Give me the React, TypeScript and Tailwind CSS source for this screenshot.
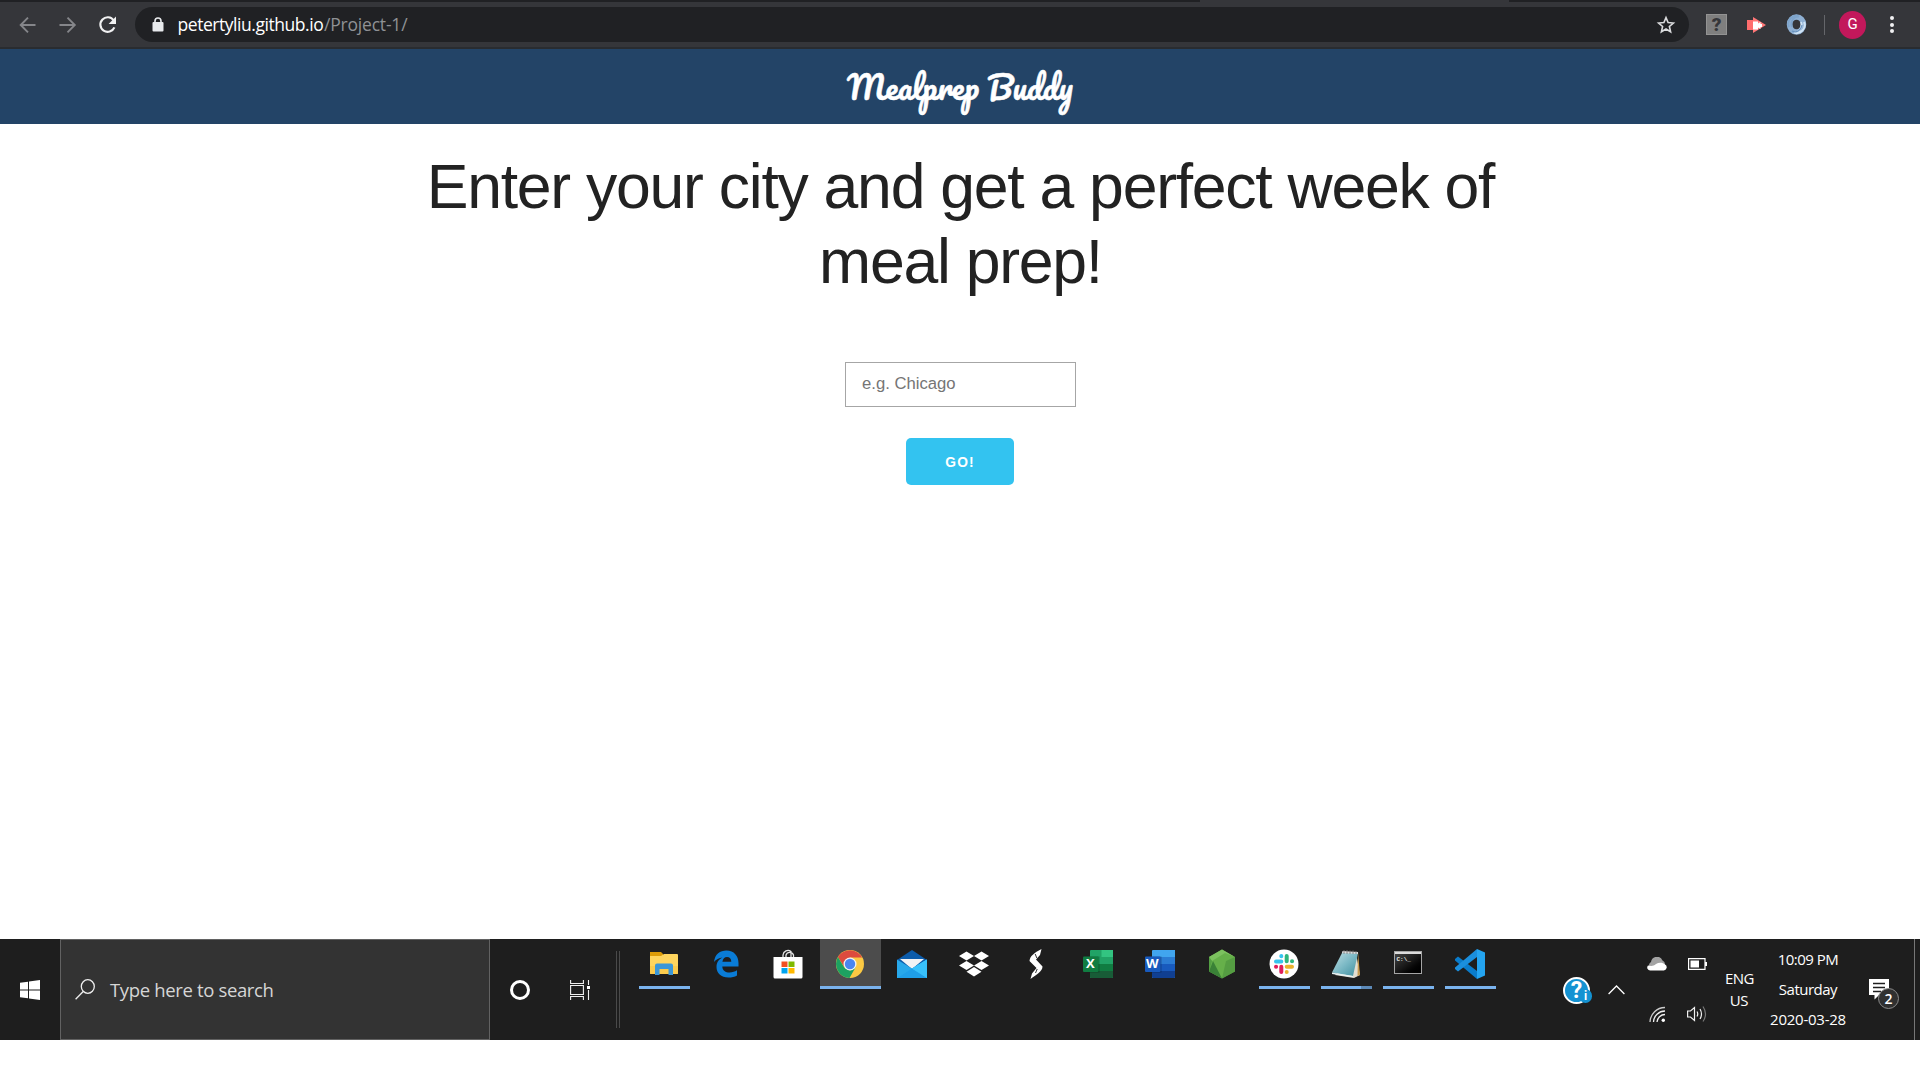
import React from "react";

const SEGOE = "font-['Segoe_UI','Open_Sans','Noto_Sans',sans-serif]";

function BrowserBar() {
  return (
    <div className={`flex h-[49px] w-full flex-col bg-[#35363a] ${SEGOE}`}>
      <div className="flex h-[2px] bg-[#202124]">
        <div className="ml-[1200px] w-[309px] bg-[#35363a]" />
      </div>
      <div className="flex h-[45px] items-center">
        <svg className="ml-[18px]" width="20" height="20" viewBox="0 0 20 20" fill="none" stroke="#85868a" strokeWidth="1.9">
          <path d="M17.5 10H3M10 2.7L2.7 10L10 17.3" />
        </svg>
        <svg className="ml-5" width="20" height="20" viewBox="0 0 20 20" fill="none" stroke="#85868a" strokeWidth="1.9">
          <path d="M1.500 10H16.500M9.500 2.7L16.800 10L9.500 17.3" />
        </svg>
        <svg className="ml-5" width="20" height="20" viewBox="0 0 20 20" fill="none">
          <path d="M15.700 5.4A7.3 7.3 0 1 0 16.400 12.4" stroke="#f1f1f2" strokeWidth="2.2" />
          <path d="M18 1.6V9H10.600Z" fill="#f1f1f2" />
        </svg>
        <div className="ml-[17px] flex h-[35px] w-[1554px] items-center rounded-full bg-[#202124]">
          <svg className="ml-[16.5px]" width="12" height="15" viewBox="0 0 12 15">
            <path d="M3 6V4a3 3 0 0 1 6 0V6" fill="none" stroke="#e8eaed" strokeWidth="1.6" />
            <rect x="0.5" y="5" width="11" height="9.5" rx="1" fill="#e8eaed" />
          </svg>
          <div className="ml-[14px] flex text-[17.5px] leading-none">
            <span className="w-[146.5px] whitespace-nowrap tracking-[-0.45px] text-white">petertyliu.github.io</span>
            <span className="whitespace-nowrap tracking-[-0.2px] text-[#8f9195]">/Project-1/</span>
          </div>
          <svg className="ml-auto mr-[13px]" width="20" height="20" viewBox="0 0 20 20" fill="none" stroke="#dadbdd" strokeWidth="1.6">
            <path d="M10 2.6L12.1 7.5L17.4 8L13.4 11.5L14.6 16.8L10 14L5.4 16.8L6.6 11.5L2.6 8L7.9 7.5Z" />
          </svg>
        </div>
        <div className="ml-[17px] flex h-[21px] w-[21px] items-center justify-center border border-[#939393] bg-[#7f7f7f] font-['Roboto'] text-[19px] font-black leading-none text-[#35363a]">?</div>
        <svg className="ml-[19px]" width="21" height="18" viewBox="0 0 21 18">
          <path d="M1 4h6V1l13 8L7 17v-3H1Z" fill="#ff7777" />
          <path d="M1 4h6v10H1Z" fill="#ff6d6d" />
          <path d="M7 5.500h5v2l2.500-1.500v2h1.500v3h-1.500v2l-2.500-1.500v2H7Z" fill="#fff" />
        </svg>
        <svg className="ml-[19px]" width="21" height="21" viewBox="0 0 21 21" fill="none">
          <ellipse cx="10.5" cy="10.5" rx="7" ry="7.500" stroke="#8fb0d3" strokeWidth="5.5" />
          <path d="M3 13C0 6 7 0 13 2.5C8 2 4 7 6 13" stroke="#7ea4cb" strokeWidth="2" />
          <path d="M18 8C21 14 14 21 8 18.5C13 19 17 13 15 8" stroke="#cfe3f5" strokeWidth="2" />
          <path d="M6 17C10 19 15 17 16 11" stroke="#6a93c0" strokeWidth="1.2" />
        </svg>
        <div className="ml-[17px] h-5 w-px bg-[#65666a]" />
        <div className="ml-[14px] flex h-7 w-[27px] items-center justify-center rounded-full bg-[#c2185b] font-['Roboto'] text-[15px] text-white">G</div>
        <div className="ml-[24px] flex flex-col gap-[2.5px]">
          <i className="size-1 rounded-full bg-[#f1f1f2]" />
          <i className="size-1 rounded-full bg-[#f1f1f2]" />
          <i className="size-1 rounded-full bg-[#f1f1f2]" />
        </div>
      </div>
      <div className="h-[2px] bg-[#292c30]" />
    </div>
  );
}

const Explorer = () => (
  <svg width="30" height="30" viewBox="0 0 30 30">
    <path d="M1 3h11l2 2v4H1Z" fill="#dd9c08" />
    <path d="M1 7h11l3-2h13a1 1 0 0 1 1 1v18a1 1 0 0 1-1 1H2a1 1 0 0 1-1-1Z" fill="#ffd55e" />
    <path d="M1 17h28v7a1 1 0 0 1-1 1H2a1 1 0 0 1-1-1Z" fill="#fbcb4d" />
    <path d="M6 26V16.500a2 2 0 0 1 2-2h14a2 2 0 0 1 2 2V26h-4.500v-6h-9v6Z" fill="#3b97d8" />
  </svg>
);
const Edge = () => (
  <svg width="28" height="30" viewBox="0 0 28 30">
    <path d="M2 13C3 5 8 1.500 14.500 1.500C22 1.500 26.500 7 26.500 14V17.500H10.300C10.500 21.500 13.500 23.500 17.500 23.500C20.500 23.500 22.800 22.600 25 21.300V26.500C22.500 27.900 19.800 28.500 16.500 28.500C9 28.500 4.500 24 4.500 18C4.500 13.500 7 10.200 10.500 8.600C7 9 4 10.500 2 13ZM10.400 12.800H19.300C19.300 9.700 17.700 8 15 8C12.500 8 10.900 10 10.400 12.800Z" fill="#0a7cd6" />
  </svg>
);
const Store = () => (
  <svg width="30" height="30" viewBox="0 0 30 30">
    <path d="M10 9V6a5 5 0 0 1 8-3.500V9M13 9V6a4 4 0 0 1 7.500 0V9" fill="none" stroke="#e5e5e5" strokeWidth="1.300" />
    <path d="M.5 8h29v20a1.500 1.500 0 0 1-1.500 1.500H2A1.500 1.500 0 0 1 .5 28Z" fill="#fff" />
    <path d="M8.500 12.500h6v5.500h-6Z" fill="#f25022" />
    <path d="M15.500 12.500h6v5.500h-6Z" fill="#7fba00" />
    <path d="M8.500 19h6v5.500h-6Z" fill="#00a4ef" />
    <path d="M15.500 19h6v5.500h-6Z" fill="#ffb900" />
  </svg>
);
const Chrome = () => (
  <svg width="28" height="28" viewBox="0 0 28 28">
    <circle cx="14" cy="14" r="14" fill="#fbc943" />
    <path d="M1.900 7A14 14 0 0 1 26.100 7.500H14L8.300 17Z" fill="#dd4b3e" />
    <path d="M1.900 7L8.300 17.500L14 20.500L19.500 17.500L13.500 28A14 14 0 0 1 1.900 7Z" fill="#1da261" />
    <circle cx="14" cy="14" r="6.500" fill="#f4f4f4" />
    <circle cx="14" cy="14" r="5.200" fill="#4a86f0" />
  </svg>
);
const Mail = () => (
  <svg width="30" height="30" viewBox="0 0 30 30">
    <path d="M0 11L15 1L30 11L15 20Z" fill="#0c5cab" />
    <path d="M3 10H27L15 20Z" fill="#f3f3f5" />
    <path d="M0 10.500L15 19.500L30 10.500V29H0Z" fill="#28a8ea" />
    <path d="M0 29L30 10.500V29Z" fill="#32b8f5" />
    <path d="M15 19.500L30 29H0Z" fill="#1f9fe8" />
    <path d="M15 19.500L30 10.500V29Z" fill="#38c1fb" />
  </svg>
);
const Dropbox = () => (
  <svg width="30" height="28" viewBox="0 0 30 28" fill="#fff">
    <path d="M7.500 1.500L15 6L7.500 10.500L0 6ZM22.500 1.500L30 6L22.500 10.500L15 6ZM7.500 11L15 15.500L7.500 20L0 15.500ZM22.500 11L30 15.500L22.500 20L15 15.500ZM15 17L22.500 21.800L15 26.500L7.500 21.800Z" />
  </svg>
);
const Swirl = () => (
  <svg width="16" height="32" viewBox="0 0 16 32" fill="#fff">
    <path d="M13.500 1C6 5 2 8 1.500 13L8.500 20L4 25.500L2.500 31C9 26 14.500 23.500 14.500 18.500L8 11.500L12 7Z" />
    <path d="M7.200 6L8.800 10M7.500 25L9.200 21" stroke="#1e1e1e" strokeWidth=".9" />
  </svg>
);
function Office({ letter, colors }: { letter: string; colors: string[] }) {
  return (
    <div className="relative">
      <svg width="30" height="28" viewBox="0 0 30 28">
        <path d="M7 1a1 1 0 0 1 1-1h21a1 1 0 0 1 1 1v26a1 1 0 0 1-1 1H8a1 1 0 0 1-1-1Z" fill={colors[0]} />
        <path d="M18.500 0H30v7H18.500Z" fill={colors[1]} />
        <path d="M7 7h23v7H7Z" fill={colors[2]} />
        <path d="M7 14h23v7H7Z" fill={colors[3]} />
        <path d="M7 21h23v6a1 1 0 0 1-1 1H8a1 1 0 0 1-1-1Z" fill={colors[4]} />
        <path d="M7 6.500h9.500v16H7Z" fill="#000" opacity=".25" />
        <rect x="0" y="6.500" width="15.500" height="15.500" rx="1" fill={colors[5]} />
      </svg>
      <span className="absolute left-0 top-[6.5px] flex h-[15.5px] w-[15.5px] items-center justify-center font-['Open_Sans'] text-[13px] font-bold leading-none text-white">{letter}</span>
    </div>
  );
}
const NodeHex = () => (
  <svg width="26" height="30" viewBox="0 0 26 30">
    <path d="M13 .5L26 8V22.500L13 29.500L0 22.500V8Z" fill="#66b04a" />
    <path d="M13 .5L26 8L16 4L3 12L0 8Z" fill="#7cc15f" />
    <path d="M3 12L0 22.500V8Z" fill="#539e43" />
    <path d="M4 12L13 29.500L0 22.500Z" fill="#3a8137" />
    <path d="M17 12L26 8V22.500L13 29.500Z" fill="#4f963f" opacity=".7" />
  </svg>
);
const Slack = () => (
  <svg width="30" height="30" viewBox="0 0 30 30" fill="none" strokeLinecap="round" strokeWidth="4">
    <circle cx="15" cy="15" r="14.500" fill="#fff" />
    <path d="M7 12.500H12.300M12.300 7V7.200" stroke="#36c5f0" />
    <path d="M17.700 7V12.300M23 12.300H23.100" stroke="#2eb67d" />
    <path d="M17.700 17.700H23M17.700 23V23.100" stroke="#ecb22e" />
    <path d="M12.300 17.800V23M7 17.700H7.100" stroke="#e01e5a" />
  </svg>
);
const Notepad = () => (
  <svg width="28" height="30" viewBox="0 0 28 30">
    <defs>
      <linearGradient id="pad" x1="0" y1="0" x2="1" y2="1">
        <stop offset="0" stopColor="#c3e0e4" />
        <stop offset=".5" stopColor="#7dbac6" />
        <stop offset="1" stopColor="#3f8f9f" />
      </linearGradient>
    </defs>
    <path d="M24 4L28 26L22 29L3 26Z" fill="#e2ded2" />
    <path d="M26 3L28 26L25.500 27Z" fill="#c79b50" />
    <path d="M10.500 3L26 4L21 27L0 23.500Z" fill="url(#pad)" />
    <path d="M0 23.500L21 27L20.800 28.300L0 25Z" fill="#e6f2f4" />
    <path d="M10.500 2L26 3V5L10 4Z" fill="#ddd" />
    <path d="M12 1V5M15 1V5M18 1.500V5M21 1.500V5M24 2V5" stroke="#777" strokeWidth=".8" />
  </svg>
);
const Terminal = () => (
  <div className="relative mt-[-2px] flex h-[23px] w-7 flex-col border border-[#a5a5a5] bg-black">
    <div className="h-[2px] shrink-0 bg-[#dcdcdc]" />
    <div className="h-[19px] bg-linear-to-br from-[#444] via-[#181818] to-black pl-[2px] pt-[3px] font-['Liberation_Mono'] text-[6px] font-bold leading-none text-[#eee]">C:\_</div>
  </div>
);
const VSCode = () => (
  <svg width="30" height="30" viewBox="0 0 30 30">
    <path d="M0 10L3 7.500L22 22V30L0 11.500Z" fill="#0a7ccb" />
    <path d="M0 20L3 22.500L22 8V0L0 18.500Z" fill="#1b8fdd" />
    <path d="M22 0L30 3.500V26.500L22 30Z" fill="#24a4f0" />
  </svg>
);

type App = { name: string; icon: React.ReactNode; state?: "open" | "active" | "multi" };
const apps: App[] = [
  { name: "explorer", icon: <Explorer />, state: "open" },
  { name: "edge", icon: <Edge /> },
  { name: "store", icon: <Store /> },
  { name: "chrome", icon: <Chrome />, state: "active" },
  { name: "mail", icon: <Mail /> },
  { name: "dropbox", icon: <Dropbox /> },
  { name: "swirl", icon: <Swirl /> },
  { name: "excel", icon: <Office letter="X" colors={["#21a366", "#33c481", "#21a366", "#107c41", "#185c37", "#107c41"]} /> },
  { name: "word", icon: <Office letter="W" colors={["#41a5ee", "#41a5ee", "#2b7cd3", "#185abd", "#103f91", "#185abd"]} /> },
  { name: "node", icon: <NodeHex /> },
  { name: "slack", icon: <Slack />, state: "open" },
  { name: "notepad", icon: <Notepad />, state: "multi" },
  { name: "terminal", icon: <Terminal />, state: "open" },
  { name: "vscode", icon: <VSCode />, state: "open" },
];

function Taskbar() {
  return (
    <div className={`flex h-[101px] w-full bg-[#1e1e1e] text-white ${SEGOE}`}>
      <div className="flex w-[60px] items-center justify-center">
        <svg width="20" height="20" viewBox="0 0 20 20" fill="#fff">
          <path d="M0 2.800L8 1.700V9.500H0ZM9 1.500L20 0V9.500H9ZM0 10.500H8V18.300L0 17.200ZM9 10.500H20V20L9 18.500Z" />
        </svg>
      </div>
      <div className="flex w-[430px] items-center border border-[#626262] bg-[#333]">
        <svg className="ml-[14px]" width="20" height="21" viewBox="0 0 20 21" fill="none" stroke="#efefef" strokeWidth="1.300">
          <ellipse cx="12.800" cy="7.500" rx="6.500" ry="6.800" />
          <path d="M8.200 12.500L.6 20.300" />
        </svg>
        <span className="ml-[15px] mt-[2px] whitespace-nowrap text-[18.5px] leading-none tracking-[-0.35px] text-[#d6d6d6]">Type here to search</span>
      </div>
      <div className="flex w-[60px] items-center justify-center">
        <div className="h-5 w-5 rounded-full border-[3px] border-white" />
      </div>
      <div className="flex w-[60px] items-center justify-center">
        <svg width="20" height="20" viewBox="0 0 20 20" fill="none" stroke="#f0f0f0" strokeWidth="1.100">
          <path d="M.6 0V3.500H13.400V0M.6 5.500H13.400V14.500H.6ZM.6 20V16.500H13.400V20M18.500 0V5M18.500 10V20" />
          <path d="M17 6h3v3h-3Z" fill="#fff" stroke="none" />
        </svg>
      </div>
      <div className="ml-[6px] mt-3 h-[77px] w-1 border-x border-[#4a4a4a]" />
      <div className="ml-[14px] flex h-[50px] gap-px">
        {apps.map((a) => (
          <div key={a.name} className={`flex w-[61px] flex-col items-center ${a.state === "active" ? "bg-[#4c4c4c]" : ""}`}>
            <div className="flex h-[47px] items-center pr-[2px] pt-[2px]">{a.icon}</div>
            {a.state === "active" && <div className="h-[3px] w-full bg-[#7ab3ee]" />}
            {a.state === "open" && <div className="h-[3px] w-[51px] bg-[#7ab3ee]" />}
            {a.state === "multi" && (
              <div className="flex h-[3px] w-[51px] bg-[#7ab3ee]">
                <div className="ml-auto w-[11px] bg-[#5c89b7]" />
              </div>
            )}
          </div>
        ))}
      </div>
      <div className="ml-auto flex">
        <div className="flex w-[28px] items-center">
          <div className="relative mt-[2px] flex h-[27px] w-[27px] shrink-0 items-center justify-center rounded-full border-2 border-white bg-[#1492d2] font-['Roboto'] text-[23px] font-bold leading-none">
            ?
            <span className="absolute -right-[4px] bottom-[-1px] flex h-[14px] w-[13px] items-center justify-center rounded-full bg-[#1492d2] text-[12px] leading-none">i</span>
          </div>
        </div>
        <div className="flex w-[46px] items-center justify-center pl-1">
          <svg width="17" height="10" viewBox="0 0 17 10" fill="none" stroke="#fff" strokeWidth="1.300">
            <path d="M.6 9L8.500 1L16.400 9" />
          </svg>
        </div>
        <div className="flex w-[40px] flex-col items-center">
          <svg className="mt-[18px]" width="20" height="14" viewBox="0 0 20 14">
            <path d="M3.500 11A3.500 3.500 0 0 1 4 5A6 6 0 0 1 15.500 3.500A4.500 4.500 0 0 1 18 8L10 9Z" fill="#a3a3a3" />
            <path d="M3.200 13.500A3 3 0 0 1 1 8.500C4 9 6 9.500 9 7C12 5 16 5.500 18 7.500A3.200 3.200 0 0 1 17 13.500Z" fill="#fff" />
          </svg>
          <svg className="mt-[35px]" width="17" height="17" viewBox="0 0 17 17" fill="none" stroke="#f1f1f1" strokeWidth="1.300">
            <path d="M1 16A15 15 0 0 1 16 1.500" stroke="#ccc" />
            <path d="M4.500 16A11.500 11.500 0 0 1 16 5M8 16A8 8 0 0 1 16 8.500" />
            <circle cx="14.300" cy="14.300" r="1.700" fill="#fff" stroke="none" />
          </svg>
        </div>
        <div className="flex w-[40px] flex-col items-center">
          <svg className="mt-[19px]" width="19" height="12" viewBox="0 0 19 12">
            <path d="M.6.600H17V11.400H.6Z" fill="none" stroke="#fff" strokeWidth="1.200" />
            <path d="M2.500 2.500H11V9.500H2.500ZM17 4h2v4h-2Z" fill="#fff" />
          </svg>
          <svg className="mt-[35px]" width="20" height="18" viewBox="0 0 20 18" fill="none" stroke="#f1f1f1" strokeWidth="1.200">
            <path d="M.6 6H3.500L7.500 2.500V15.500L3.500 12H.6Z" />
            <path d="M10 6.500Q11.500 9 10 11.500M13 4Q16 9 13 14" />
            <path d="M16 1.500Q21 9 16 16.500" stroke="#777" />
          </svg>
        </div>
        <div className="flex w-[45px] flex-col items-center pt-[28px] text-[15px] leading-[22px]">
          <span className="tracking-[-0.5px]">ENG</span>
          <span className="-ml-px tracking-[-0.3px]">US</span>
        </div>
        <div className="flex w-[92px] flex-col items-center whitespace-nowrap pt-[5px] text-[15px] leading-[30px]">
          <span className="tracking-[-0.5px]">10:09 PM</span>
          <span className="tracking-[-0.5px]">Saturday</span>
          <span className="tracking-[-0.25px]">2020-03-28</span>
        </div>
        <div className="flex w-[60px] justify-center">
          <div className="relative mt-10 h-[31px] w-[30px]">
            <svg width="20" height="21" viewBox="0 0 20 21">
              <path d="M0 0H20V16H10L5.500 20.500V16H0Z" fill="#fff" />
              <path d="M4 4.500H16M4 8.500H16M4 12.500H12" stroke="#1e1e1e" strokeWidth="1.300" />
            </svg>
            <span className="absolute right-0 top-[9px] flex h-[21px] w-[21px] items-center justify-center rounded-full border border-[#8a8a8a] bg-[#303030] text-[14px] font-semibold leading-none">2</span>
          </div>
        </div>
        <div className="w-[6px] border-l border-[#777]" />
      </div>
    </div>
  );
}

export default function App() {
  return (
    <div className="flex h-[1080px] w-[1920px] flex-col overflow-hidden bg-white">
      <BrowserBar />
      <header className="flex h-[75px] items-center justify-center bg-[#234467]">
        <span className="mt-px whitespace-nowrap font-['Pacifico','Lato',cursive] text-[31.25px] leading-none text-white [-webkit-text-stroke:0.5px_white]">Mealprep Buddy</span>
      </header>
      <main className="flex flex-1 flex-col items-center font-['Liberation_Sans',Arial,sans-serif]">
        <h1 className="mt-[25px] w-[1150px] pl-px text-center text-[62.5px] leading-[75px] tracking-[-1.25px] text-[#222]">
          Enter your city and get a perfect week of meal prep!
        </h1>
        <input
          className="mt-[63px] h-[45px] w-[231px] border border-[#a6a6a6] pb-px pl-[16.5px] text-[16.67px] outline-none placeholder:text-[#757575]"
          placeholder="e.g. Chicago"
        />
        <button className="mt-[31px] h-[47px] w-[108px] rounded-[5px] bg-[#33c3f0] pt-[3px] text-[13.75px] font-bold tracking-[1.1px] text-white">GO!</button>
      </main>
      <Taskbar />
      <div className="h-10 bg-white" />
    </div>
  );
}
